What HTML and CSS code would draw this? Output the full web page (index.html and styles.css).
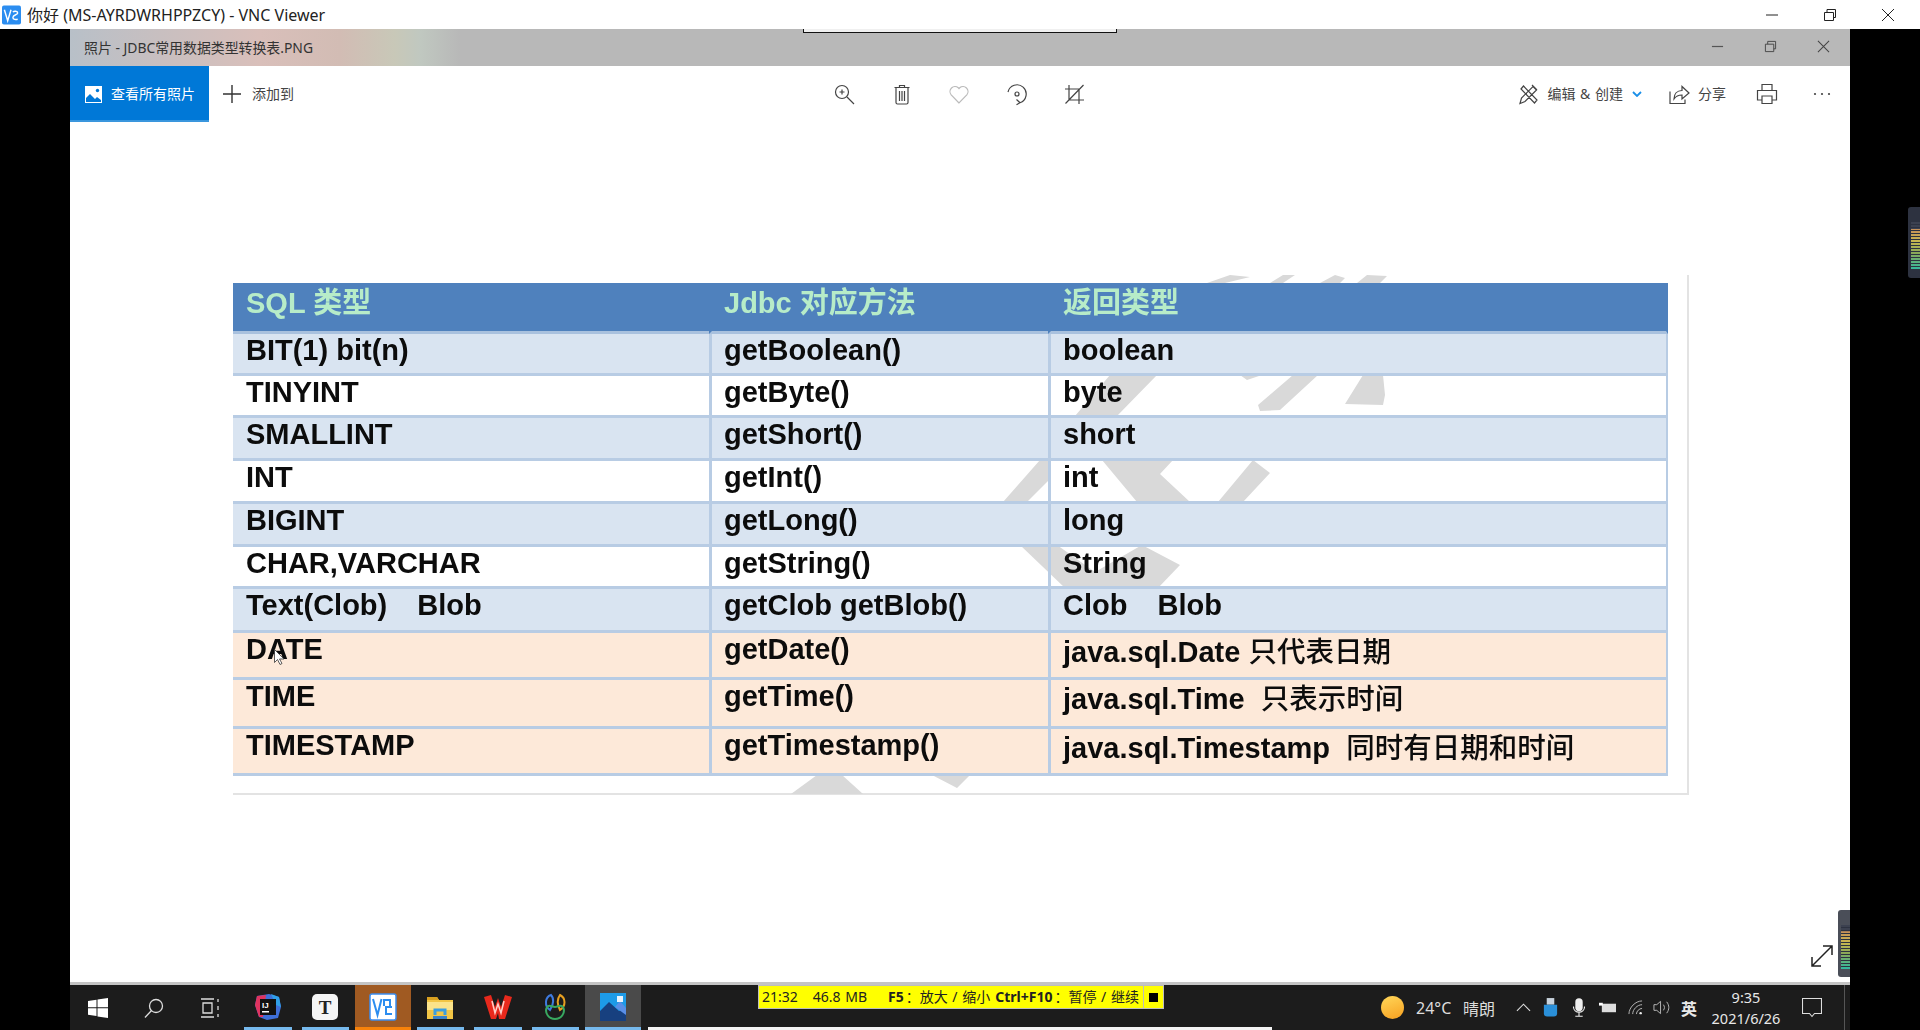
FILE: index.html
```html
<!DOCTYPE html>
<html lang="zh-CN">
<head>
<meta charset="utf-8">
<title>VNC Viewer</title>
<link rel="stylesheet" href="styles.css">
</head>
<body>
<div class="screen">
  <header class="vnc-bar">
    <svg class="vnc-logo" viewBox="0 0 20 20"><rect width="20" height="20" rx="2" fill="#2b8df0"/><path d="M2.500 4.500 6 16 9.500 4.500" fill="none" stroke="#fff" stroke-width="1.500"/><path d="M11.500 7c1-1.500 5-1.500 5 1 0 2-5 1.500-5 4.500 0 2.500 3 2.500 5 2" fill="none" stroke="#fff" stroke-width="1.500"/></svg>
    <span class="vnc-title">你好 (MS-AYRDWRHPPZCY) - VNC Viewer</span>
    <div class="win-controls">
      <svg class="ctl" viewBox="0 0 14 14"><path d="M1 7h12" stroke="#222" fill="none"/></svg>
      <svg class="ctl" viewBox="0 0 14 14"><path d="M1.500 4.500h9v8h-9zM4 4.500V1.500h8.500v8h-2" stroke="#222" fill="none"/></svg>
      <svg class="ctl" viewBox="0 0 14 14"><path d="M1 1l12 12M13 1 1 13" stroke="#222" fill="none"/></svg>
    </div>
  </header>

  <div class="remote">
    <div class="app-title">
      <div class="bracket"></div>
      <span class="app-name">照片 - JDBC常用数据类型转换表.PNG</span>
      <div class="app-controls">
        <svg class="actl" viewBox="0 0 14 14"><path d="M1 7h12" stroke="#555" stroke-width="1.300" fill="none"/></svg>
        <svg class="actl" viewBox="0 0 14 14"><path d="M1.500 4.500h9v8h-9zM4 4.500V1.500h8.500v8h-2" stroke="#444" fill="none"/></svg>
        <svg class="actl" viewBox="0 0 14 14"><path d="M1 1l12 12M13 1 1 13" stroke="#444" stroke-width="1.100" fill="none"/></svg>
      </div>
    </div>

    <nav class="toolbar">
      <div class="all-photos">
        <svg class="all-icon" viewBox="0 0 17 17"><rect width="17" height="17" fill="#fff"/><path d="M1 12 5 8l5 5 2-2 4 3v2H1z" fill="#0078d7"/><circle cx="12.500" cy="4.500" r="1.700" fill="#0078d7"/></svg>
        <span>查看所有照片</span>
      </div>
      <div class="add-to">
        <svg class="plus" viewBox="0 0 18 18"><path d="M9 0v18M0 9h18" stroke="#333" stroke-width="1.400" fill="none"/></svg>
        <span>添加到</span>
      </div>
      <div class="center-tools">
        <svg class="tool" viewBox="0 0 24 24"><circle cx="10" cy="10" r="6.500"/><path d="M7.500 10h5M10 7.500v5M15 15l7 7"/></svg>
        <svg class="tool" viewBox="0 0 24 24"><path d="M4.500 5.500h15M9.500 5.500V3.500h5v2M6 5.500v15a1.500 1.500 0 0 0 1.500 1.500h9a1.500 1.500 0 0 0 1.500-1.500v-15M9.500 9v10M12 9v10M14.500 9v10"/></svg>
        <svg class="tool heart" viewBox="0 0 24 24"><path d="M12 21 4.200 12.800a5 5 0 0 1 7.100-7l.7.8.7-.8a5 5 0 0 1 7.100 7z"/></svg>
        <svg class="tool" viewBox="0 0 24 24"><path d="M3 10A9.200 9.200 0 1 1 15 20.700M11.500 17.500l3.500 3.200-3.500 2"/><circle cx="12" cy="12" r="2"/></svg>
        <svg class="tool" viewBox="0 0 24 24"><path d="M7 3v15h15M3 7h14v15M3.500 21.500 21.500 3"/></svg>
      </div>
      <div class="right-tools">
        <svg class="tool edit" viewBox="0 0 24 24"><path d="M3 21.500 4.500 16 16 4.500 19.500 8 8 19.500zM4 7l2.500-3L20 18l-2.500 3zM15 3l5 5"/></svg>
        <span class="edit-label">编辑 &amp; 创建</span>
        <svg class="chev" viewBox="0 0 10 6"><path d="M1 1l4 4 4-4" stroke="#1a8fe8" stroke-width="1.800" fill="none"/></svg>
        <svg class="tool share" viewBox="0 0 24 24"><path d="M3 9.500v12h15v-4M7 17c0-5 3-8.500 8-8.500V4.500l7 6.500-7 6v-4c-3 0-6 1-8 4z"/></svg>
        <span class="share-label">分享</span>
        <svg class="tool print" viewBox="0 0 24 24"><path d="M7 8V2.500h10V8M6.500 18H2.500V8.500h19V18h-4M7 14h10v7.500H7z"/></svg>
        <svg class="dots" viewBox="0 0 18 4"><circle cx="2" cy="2" r="1.100"/><circle cx="9" cy="2" r="1.100"/><circle cx="16" cy="2" r="1.100"/></svg>
      </div>
    </nav>

    <main class="content">
      <figure class="photo">
        <svg class="watermark" viewBox="233 275 1456 520">
          <path d="M1207 283 1230 275 1250 277 1225 283zM1270 283 1283 275 1295 275 1283 283zM1320 283 1335 275 1345 278 1340 283zM1357 283 1367 275 1387 276 1380 283z"/>
          <path d="M1110 375 1157 375 1117 416 1075 416zM1240 375 1247 380 1262 375zM1293 375 1318 375 1280 410 1260 411 1258 405zM1363 375 1383 375 1385 395 1383 405 1345 404z"/>
          <path d="M1003 502 1040 460 1050 460 1050 479 1027 502zM1102 460 1173 460 1160 474 1190 502 1137 502zM1253 460 1270 473 1243 502 1218 502z"/>
          <path d="M1020 545 1057 545 1095 572 1142 545 1180 565 1158 588 1065 588z"/>
          <path d="M791 794 817 775 842 775 863 794zM932 775 970 775 957 788z"/>
        </svg>
        <table class="types">
          <tr class="head h51"><td>SQL 类型</td><td>Jdbc 对应方法</td><td>返回类型</td></tr>
          <tr class="blue h42"><td>BIT(1) bit(n)</td><td>getBoolean()</td><td>boolean</td></tr>
          <tr class="h42"><td>TINYINT</td><td>getByte()</td><td>byte</td></tr>
          <tr class="blue h43"><td>SMALLINT</td><td>getShort()</td><td>short</td></tr>
          <tr class="h43"><td>INT</td><td>getInt()</td><td>int</td></tr>
          <tr class="blue h43"><td>BIGINT</td><td>getLong()</td><td>long</td></tr>
          <tr class="h42"><td>CHAR,VARCHAR</td><td>getString()</td><td>String</td></tr>
          <tr class="blue h44"><td>Text(Clob)<span class="gap"> </span>Blob</td><td>getClob getBlob()</td><td>Clob<span class="gap"> </span>Blob</td></tr>
          <tr class="peach h47"><td>DATE</td><td>getDate()</td><td class="low">java.sql.Date <span class="cn">只代表日期</span></td></tr>
          <tr class="peach h49"><td>TIME</td><td>getTime()</td><td class="low">java.sql.Time&nbsp; <span class="cn">只表示时间</span></td></tr>
          <tr class="peach h47"><td>TIMESTAMP</td><td>getTimestamp()</td><td class="low">java.sql.Timestamp&nbsp; <span class="cn">同时有日期和时间</span></td></tr>
        </table>
      </figure>
      <svg class="expand" viewBox="0 0 22 22"><path d="M1 21 21 1M12 1h9v9M1 12v9h9" stroke="#222" stroke-width="1.500" fill="none"/></svg>
      <div class="meter meter-inner"><i></i></div>
      <svg class="cursor" viewBox="0 0 11 16"><path d="M.5.500v13l3-3 2.500 5 2-1-2.500-4.500h4.500z" fill="#fff" stroke="#333" stroke-width=".8"/></svg>
    </main>

    <footer class="taskbar">
      <div class="sys"><svg class="s20" viewBox="0 0 20 20"><path d="M0 3 8.500 1.700V9.300H0zM9.500 1.500 20 0V9.300H9.500zM0 10.300H8.500V18L0 16.800zM9.500 10.300H20V20L9.500 18.500z" fill="#fff"/></svg></div>
      <div class="sys"><svg class="s20" viewBox="0 0 20 20"><circle cx="12" cy="8" r="6.500" fill="none" stroke="#ddd" stroke-width="1.300"/><path d="M7.500 12.500 1 19.500" stroke="#ddd" stroke-width="1.300"/></svg></div>
      <div class="sys"><svg class="s20" viewBox="0 0 20 20"><path d="M1 1h13M1 19h13M3 5h9v10H3zM18 1v3M18 8v4M18 16v3" fill="none" stroke="#ddd" stroke-width="1.300"/></svg></div>
      <div class="app under">
        <svg class="a28" viewBox="0 0 28 28"><path d="M3 3 15 1 25 4 27 14 24 25 13 27 5 24 1 12z" fill="#3f6fd8"/><path d="M1 12 3 3 12 2 9 24 5 24z" fill="#e0335f"/><path d="M17 1 25 4 27 14 22 12z" fill="#2f9fe8"/><rect x="6" y="6" width="16" height="16" fill="#111"/><text x="8" y="15" class="ij">IJ</text><rect x="8" y="18" width="7" height="1.500" fill="#fff"/></svg>
      </div>
      <div class="app under">
        <svg class="a28" viewBox="0 0 28 28"><rect x="1" y="1" width="26" height="26" rx="5" fill="#f5f5f5"/><text x="14" y="21" class="tee">T</text></svg>
      </div>
      <div class="app active vnc">
        <svg class="a28" viewBox="0 0 28 28"><rect x="1" y="1" width="26" height="26" rx="2" fill="#fff" stroke="#3b8df0" stroke-width="1.500"/><path d="M4 6 8.500 22 12.500 6" fill="none" stroke="#2b8df0" stroke-width="2"/><path d="M15 13V7h6v6M23 14h-6v7h6" fill="none" stroke="#2b8df0" stroke-width="2"/></svg>
      </div>
      <div class="app under">
        <svg class="a28" viewBox="0 0 28 28"><path d="M1 4h10l2 3h14v19H1z" fill="#f2c545"/><path d="M1 4h10l2 3H1z" fill="#d9a020"/><path d="M1 9h26v8H1z" fill="#fbe38a"/><path d="M9 22v-5h10v5" fill="none" stroke="#3a9ee0" stroke-width="3"/><path d="M7 26v-3h14v3z" fill="#3a82c8"/></svg>
      </div>
      <div class="app under">
        <svg class="a28" viewBox="0 0 28 28"><path d="M0 4 7 2 11 14 14 5 17 14 21 2 28 4 21 26 15 26 14 20 12 26 7 26z" fill="#e8291c"/><path d="M8 8 11 20 14 11 17 20 20 8" fill="none" stroke="#ffd0c8" stroke-width="1.500"/></svg>
      </div>
      <div class="app under">
        <svg class="a28" viewBox="0 0 28 28"><path d="M9 17C3 13 4 4 10 2c3 3 3 9-1 15z" fill="none" stroke="#3f7be0" stroke-width="2"/><path d="M19 17c-3-6-3-11 0-15 6 3 6 11 0 15z" fill="none" stroke="#e8a020" stroke-width="2"/><path d="M6 14c-3 6 2 12 8 12s11-6 8-12c-2-3-5 0-8 0s-6-3-8 0z" fill="none" stroke="#38a860" stroke-width="2"/></svg>
      </div>
      <div class="app active photos">
        <svg class="a28" viewBox="0 0 26 28"><rect width="26" height="28" fill="#1d9be8"/><path d="M0 28V18L9 9l10 9 7-3v13z" fill="#17407f"/><path d="M15 14l5-6 6 7v7z" fill="#5a8fe8"/><rect x="17" y="3" width="6" height="6" fill="#e8f4ff"/></svg>
      </div>
      <div class="rec-bar">
        <div class="rec-info"><span class="rec-time">21:32</span><span class="rec-size">46.8 MB</span><b class="rec-f5">F5</b><span class="rec-zoom">：放大 / 缩小</span><b class="rec-ctrl">Ctrl+F10</b><span class="rec-pause">：暂停 / 继续</span></div>
        <div class="rec-stop"><i></i></div>
      </div>
      <div class="white-strip"></div>
      <div class="tray">
        <div class="sun"></div>
        <span class="temp">24°C</span>
        <span class="temp">晴朗</span>
        <svg class="t16" viewBox="0 0 16 16"><path d="M1 11.500 8 4.500l7 7" fill="none" stroke="#ddd" stroke-width="1.200"/></svg>
        <svg class="t18" viewBox="0 0 18 20"><rect x="5" y="0" width="8" height="7" fill="#c8d2dc"/><path d="M2 7h14v9a3.500 3.500 0 0 1-3.500 3.500h-7A3.500 3.500 0 0 1 2 16z" fill="#2a8fd8"/></svg>
        <svg class="mic" viewBox="0 0 13 20"><rect x="2.500" y="0" width="8" height="14" rx="4" fill="#eee"/><path d="M.5 9c0 8 12 8 12 0M6.500 15v4M2.500 19.500h8" fill="none" stroke="#eee" stroke-width="1.200"/></svg>
        <svg class="t18" viewBox="0 0 18 12"><path d="M3 2h15v9H3z" fill="#ddd"/><path d="M0 1h4v3H0z" fill="#fff"/></svg>
        <svg class="t16" viewBox="0 0 16 16"><path d="M1 15C1 8 8 1 15 1M5 15c0-5 5-10 10-10M9 15c0-3 3-6 6-6" fill="none" stroke="#bbb"/><circle cx="13.500" cy="14" r="1.300" fill="#eee"/></svg>
        <svg class="t18" viewBox="0 0 18 16"><path d="M1 5h3l4-3.500v13L4 11H1zM11 5c1.500 2 1.500 4 0 6M14.500 2c3 4 3 8 0 12" fill="none" stroke="#bbb"/></svg>
        <span class="ime">英</span>
        <div class="clock"><span>9:35</span><span>2021/6/26</span></div>
        <svg class="note" viewBox="0 0 20 20"><path d="M.5.500h19v15h-7l-2.500 3-2.500-3h-7z" fill="none" stroke="#ddd" stroke-width="1.100"/></svg>
        <div class="show-desktop"></div>
      </div>
    </footer>
  </div>
  <div class="meter meter-outer"><i></i></div>
</div>
</body>
</html>
```

FILE: styles.css
```css
* { box-sizing: border-box; }
html, body { margin: 0; padding: 0; background: #000; }
body { font-family: "Noto Sans", "Noto Sans CJK SC", sans-serif; }
svg { display: block; flex: none; }

.screen { position: relative; width: 1920px; height: 1030px; display: flex; flex-direction: column; overflow: hidden; }

/* VNC window bar */
.vnc-bar { height: 29px; flex: none; background: #fff; display: flex; align-items: center; padding-left: 2px; position: relative; }
.vnc-logo { width: 19px; height: 20px; }
.vnc-title { margin: 0 0 2px 6px; font-size: 16px; color: #222; white-space: nowrap; }
.win-controls { margin-left: auto; display: flex; gap: 44px; padding-right: 25px; }
.ctl { width: 14px; height: 14px; }

.remote { flex: 1; min-height: 0; margin: 0 70px; display: flex; flex-direction: column; background: #fff; }

/* Photos app title */
.app-title { position: relative; height: 37px; flex: none; display: flex; align-items: center; padding: 0 0 2px 14px;
  background: linear-gradient(90deg, #b8c0c8 0, #c8bfc0 90px, #d9bfba 190px, #d2bcb4 270px, #c8c8b8 325px, #c0c8c0 350px, #b8b8b8 390px, #b8b8b8 100%); }
.bracket { position: absolute; left: 733px; top: 0; width: 314px; height: 4px; background: #f0f0f0; border: 1px solid #111; border-top: 0; }
.app-name { font-size: 13.900px; color: #333; white-space: nowrap; }
.app-controls { margin-left: auto; display: flex; gap: 40px; padding-right: 20px; }
.actl { width: 13px; height: 13px; }

/* toolbar */
.toolbar { height: 56px; flex: none; display: flex; align-items: center; background: #fff; font-size: 14px; color: #444; }
.all-photos { width: 139px; height: 56px; flex: none; display: flex; align-items: center; padding: 0 0 1px 15px; gap: 9px; color: #fff; background: #0078d7; border-bottom: 2px solid #3a96dd; }
.all-icon { width: 17px; height: 17px; margin-top: 3px; }
.add-to { display: flex; align-items: center; gap: 11px; margin: 0 0 0 14px; }
.add-to span { margin-bottom: 3px; }
.plus { width: 18px; height: 18px; }
.center-tools { display: flex; gap: 33.500px; margin-left: 538px; }
.tool { width: 24px; height: 24px; fill: none; stroke: #444; stroke-width: 1.200; }
.heart { stroke: #bbb; }
.right-tools { margin-left: auto; display: flex; align-items: center; padding-right: 19px; }
.edit { margin-right: -1px; }
.edit-label { margin: 0 0 2px 7px; white-space: nowrap; word-spacing: 1px; }
.chev { width: 10px; height: 6px; margin-left: 9px; }
.share { margin-left: 25px; }
.share-label { margin: 0 0 2px 7px; }
.print { margin-left: 29px; }
.dots { width: 18px; height: 4px; margin-left: 34px; fill: #444; }

/* canvas */
.content { position: relative; flex: 1; min-height: 0; background: #fff; padding: 153px 161px 0 163px; }
.photo { position: relative; margin: 0; height: 520px; padding: 8px 19px 0 0; border-right: 2px solid #e3e3e3; border-bottom: 2px solid #e3e3e3; }
.watermark { position: absolute; left: 0; top: 0; width: 1456px; height: 520px; fill: #d9d9d9; }

.types { position: relative; width: 1435px; table-layout: fixed; border-collapse: separate; border-spacing: 0; font: bold 29px/32px "Liberation Sans", "Noto Sans CJK SC", sans-serif; color: #0c0c0c; filter: blur(.35px); }
.types td { padding: 0 0 0 12px; vertical-align: top; white-space: nowrap; border-bottom: 3px solid #b8cce4; border-left: 3px solid #b8cce4; }
.types td:first-child { width: 476px; padding-left: 13px; border-left: 0; }
.types td:nth-child(2) { width: 339px; }
.types td:last-child { border-right: 2px solid #b8cce4; }
.types td.low { padding-top: 3px; }
.h42 td { height: 42px; }
.h43 td { height: 43px; }
.h44 td { height: 44px; }
.h47 td { height: 47px; }
.h49 td { height: 49px; }
.h51 td { height: 51px; }
.types .head td { background: #4f81bd; color: #b7ecc8; border-color: #4f81bd; border-bottom-color: #a9c1de; padding-top: 4px; }
.blue td { background: #d9e4f1; }
.peach td { background: #fde9d9; }
.cn { font-weight: 500; font-size: 28.500px; }
.gap { display: inline-block; width: 30px; }

.expand { position: absolute; right: 17px; bottom: 15px; width: 22px; height: 22px; }
.cursor { position: absolute; left: 204px; top: 527px; width: 11px; height: 16px; }

.meter { position: absolute; background: #2d3240; border-radius: 3px 0 0 3px; }
.meter i { position: absolute; left: 3px; right: 0; top: 15px; bottom: 8px;
  background: repeating-linear-gradient(180deg, transparent 0 2px, #2d3240 2px 3px),
    linear-gradient(180deg, #3c4150 0 14%, #c89058 15%, #c8b850 40%, #88a858 65%, #30b8a0 100%); }
.meter-outer { right: 0; top: 207px; width: 12px; height: 71px; }
.meter-inner { right: 0; bottom: 5px; width: 12px; height: 67px; background: #4a4e58; }

/* taskbar */
.taskbar { position: relative; height: 48px; flex: none; display: flex; align-items: center; background: #1c1c1c; border-top: 3px solid #c4c4c4; color: #e8e8e8; }
.sys { width: 56px; height: 45px; flex: none; display: flex; align-items: center; justify-content: center; }
.s20 { width: 20px; height: 20px; }
.sys:nth-child(3) { margin-right: 1px; }
.app { position: relative; width: 57.500px; height: 45px; flex: none; display: flex; align-items: center; justify-content: center; padding-bottom: 2px; }
.a28 { width: 28px; height: 28px; }
.under::after { content: ""; position: absolute; left: 5px; right: 5px; bottom: 0; height: 3px; background: #76b9ed; }
.active::after { content: ""; position: absolute; left: 1px; right: 1px; bottom: 0; height: 3px; }
.vnc { background: linear-gradient(#a05a22, #a05a22) 1px 0 / 56px 100% no-repeat; }
.vnc::after { background: #f7820a; }
.photos { background: linear-gradient(#4a4a4a, #4a4a4a) 1px 0 / 56px 100% no-repeat; }
.photos::after { background: #76b9ed; }
.ij { font: bold 8px "Liberation Sans", sans-serif; fill: #fff; }
.tee { font: bold 19px "Liberation Serif", serif; fill: #222; text-anchor: middle; }

.rec-bar { position: absolute; left: 688px; top: 0; width: 406px; height: 24px; display: flex; background: #ffff00; border: 1px solid #bdbdbd; color: #222; font-size: 14px; line-height: 22px; white-space: nowrap; }
.rec-info { width: 385px; display: flex; padding-left: 3px; border-right: 1px solid #bdbdbd; word-spacing: 1px; }
.rec-size { margin-left: 15px; }
.rec-f5 { margin-left: 21px; }
.rec-zoom { margin-left: 2px; }
.rec-ctrl { margin-left: 5px; }
.rec-pause { margin-left: 2px; }
.rec-stop { flex: 1; display: flex; align-items: center; justify-content: center; }
.rec-stop i { width: 9px; height: 9px; background: #000; }
.white-strip { position: absolute; left: 578px; bottom: 0; width: 624px; height: 3px; background: #f4f4f4; }

.tray { margin-left: auto; width: 469px; height: 45px; display: grid; grid-template-columns: 35px 47px 53px 26px 31px 26px 29px 25px 28px 30px 70px 21px 42px 6px; align-items: center; font-size: 16px; }
.sun { width: 23px; height: 23px; border-radius: 50%; background: linear-gradient(160deg, #ffd75a, #f7a020); }
.temp { color: #ddd; white-space: nowrap; }
.t16 { width: 15px; height: 15px; }
.t18 { width: 17px; height: 19px; }
.mic { width: 12px; height: 19px; }
.ime { font-size: 16px; font-weight: 700; }
.clock { grid-column: 11 / span 2; width: 70px; display: flex; flex-direction: column; align-items: center; font-size: 14.500px; line-height: 21px; white-space: nowrap; }
.note { width: 20px; height: 20px; }
.show-desktop { width: 1px; height: 45px; background: #555; }
```
